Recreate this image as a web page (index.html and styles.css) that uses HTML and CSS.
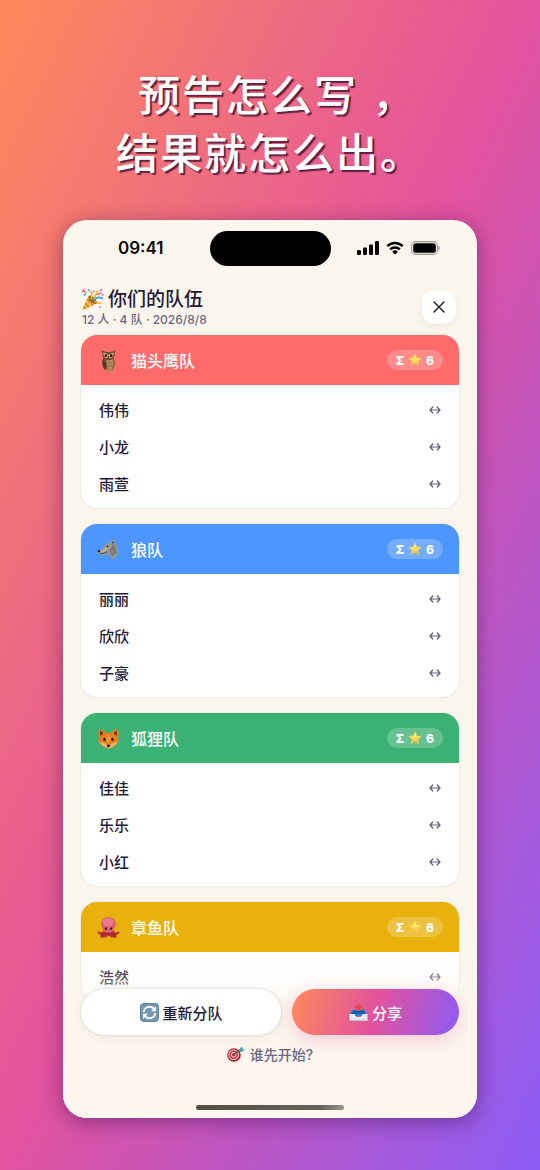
FILE: index.html
```html
<!DOCTYPE html>
<html lang="zh-CN">
<head>
    <meta charset="UTF-8">
    <meta name="viewport" content="width=device-width, initial-scale=1.0">
    <title>你们的队伍</title>
    <link rel="stylesheet" href="styles.css">
</head>
<body>

<!-- shared icons -->
<svg class="sprite" aria-hidden="true">
    <defs>
        <linearGradient id="star-fill" x1="0" y1="0" x2="0" y2="1">
            <stop offset="0" stop-color="#fff6a8"/>
            <stop offset=".5" stop-color="#ffe45c"/>
            <stop offset="1" stop-color="#f7a93c"/>
        </linearGradient>
    </defs>
    <symbol id="swap" viewBox="0 0 12 10">
        <path d="M3.8 2 1 5l2.800 3M8.200 2 11 5 8.200 8M1.200 5h9.600" fill="none" stroke="#625e70" stroke-width="1.200" stroke-linecap="round" stroke-linejoin="round"/>
    </symbol>
    <symbol id="star" viewBox="0 0 24 24">
        <path d="M12 1.500 15 8.600l7.800.6-6 5 1.900 7.600-6.700-4.100-6.700 4.100 1.900-7.600-6-5 7.800-.6z" fill="url(#star-fill)" stroke="#f9cf55" stroke-width="1" stroke-linejoin="round"/>
    </symbol>
</svg>

<h1 class="slogan">预告怎么写<span class="comma">，</span><br>结果就怎么出。</h1>

<main class="phone">
    <div class="status">
        <span class="time">09:41</span>
        <span class="island"></span>
        <span class="signals">
            <svg width="22" height="14" viewBox="0 0 22 14">
                <rect x="0" y="9" width="4" height="5" rx="1.200"/>
                <rect x="6" y="6.500" width="4" height="7.500" rx="1.200"/>
                <rect x="12" y="3.500" width="4" height="10.500" rx="1.200"/>
                <rect x="18" y="0" width="4" height="14" rx="1.200"/>
            </svg>
            <svg width="18" height="14" viewBox="0 0 18 14">
                <path d="M1.300 5.200a11 11 0 0 1 15.400 0M4.200 8.300a7 7 0 0 1 9.600 0" fill="none" stroke="#000" stroke-width="2.500"/>
                <path d="M9 13.600 6.200 10.700a4 4 0 0 1 5.600 0z"/>
            </svg>
            <svg width="29" height="14" viewBox="0 0 29 14">
                <rect x=".6" y=".6" width="25.800" height="12.800" rx="4" fill="none" stroke="#9b9892" stroke-width="1.100"/>
                <rect x="2.200" y="2.200" width="22.600" height="9.600" rx="2.600"/>
                <path d="M27.400 4.800c1.800.7 1.800 3.700 0 4.400z" fill="#9b9892"/>
            </svg>
        </span>
    </div>

    <header class="top">
        <div>
            <h2>
                <svg class="emoji" viewBox="0 0 24 24">
                    <path d="M8 8.500 1.500 21.500c-.3.900.4 1.500 1.300 1.200l13.400-6.400z" fill="#f6bd45"/>
                    <path d="m6.500 11.500 6.200 6.500M4.300 16l4 4M2.600 19.500l2.300 2.200" stroke="#c9792a" stroke-width="1.500"/>
                    <ellipse cx="12.200" cy="12.300" rx="2.600" ry="5.800" transform="rotate(-45 12.200 12.300)" fill="#9a642b"/>
                    <path d="M10.500 11.500c1-3 1.700-5.800-.4-8.500M13 12c1.500-4 3.500-5 4.300-9.500" fill="none" stroke="#f3b52e" stroke-width="1.800"/>
                    <path d="M13.500 12.800c2-3 5.800-3.300 9.500-1.800" fill="none" stroke="#54a3e3" stroke-width="2"/>
                    <path d="M14 14.300c3.200-.5 4.300 2.700 7.500 1.500" fill="none" stroke="#efaa37" stroke-width="1.600"/>
                    <path d="m1 4 2-2 1 3M20 3l2-2M17 7l4-2" fill="none" stroke="#e96a91" stroke-width="1.600"/>
                    <path d="m3 8 2-2M7 1.500l2 1.200" stroke="#4e9fe0" stroke-width="1.600"/>
                    <circle cx="13.500" cy="3.500" r="1" fill="#e45c90"/>
                    <circle cx="20" cy="20" r="1" fill="#e77b8f"/>
                    <circle cx="22.500" cy="7" r="1" fill="#df6195"/>
                    <circle cx="5.500" cy="4.500" r=".9" fill="#7cbf63"/>
                </svg>
                你们的队伍
            </h2>
            <p>12 人 · 4 队 · 2026/8/8</p>
        </div>
        <button class="close" aria-label="关闭">
            <svg width="12" height="12" viewBox="0 0 12 12"><path d="m1 1 10 10M11 1 1 11" stroke="#17151f" stroke-width="1.400" stroke-linecap="round"/></svg>
        </button>
    </header>

    <div class="teams">
        <section class="team owl">
            <div class="team-header">
                <svg class="emoji" viewBox="0 0 24 24">
                    <path d="M6.500 9c-1.800 4-1.500 9.500 2 13h7.500c3.300-3.500 3.500-9 1-13z" fill="#8b6141"/>
                    <path d="M6.700 10c-1.800 4-1.300 8.500 1.500 11.500 2.500-3.500 1.800-8-1.500-11.500z" fill="#553824"/>
                    <path d="M10.500 11.500c-.5 4 .2 7.500 1.500 10h3c2-3 2.300-6.500 1.200-10z" fill="#b58c64"/>
                    <path d="m11.500 14 1 1 1-1 1 1 1-1m-4 3 1 1 1-1 1 1 1-1" fill="none" stroke="#795236" stroke-width=".8"/>
                    <path d="M4.600 1.200 9.500 3h5l4.900-1.800c-1 2-.9 3.800-1.200 5.800-.5 3-3.200 4.500-6.200 4.500S6.300 10 5.800 7c-.3-2-.2-3.800-1.200-5.800z" fill="#6f4a33"/>
                    <path d="M6.300 3.500 10.500 5 12 6.500 13.500 5l4.200-1.500-.8 3c-.6 2-1.600 3-3.100 3.200L12 9l-1.800.7c-1.500-.2-2.500-1.200-3.100-3.200z" fill="#c8ab8a"/>
                    <circle cx="9.200" cy="7" r="1.900" fill="#e9a92b"/>
                    <circle cx="14.800" cy="7" r="1.900" fill="#e9a92b"/>
                    <circle cx="9.200" cy="7" r="1.400" fill="#1c1411"/>
                    <circle cx="14.800" cy="7" r="1.400" fill="#1c1411"/>
                    <path d="m11.200 8 .8-.8.8.8-.8 2.300z" fill="#39312d"/>
                    <path d="M9.500 21.500v1.700M11.500 21.500v1.700M14 21.500v1.700M16 21.500v1.700" stroke="#b98b4a" stroke-width="1.200"/>
                </svg>
                <h3>猫头鹰队</h3>
                <span class="score">Σ <svg><use href="#star"/></svg> 6</span>
            </div>
            <ul>
                <li>伟伟 <button aria-label="换队"><svg><use href="#swap"/></svg></button></li>
                <li>小龙 <button aria-label="换队"><svg><use href="#swap"/></svg></button></li>
                <li>雨萱 <button aria-label="换队"><svg><use href="#swap"/></svg></button></li>
            </ul>
        </section>

        <section class="team wolf">
            <div class="team-header">
                <svg class="emoji" viewBox="0 0 24 24">
                    <path d="M10 6.500c1.500-1 2.800-1.700 4-2l2-3.500c1.500.8 2.600 2.500 2.700 4.500 2.300 2.500 3.700 6 3.800 10.500l-1-.5.2 3-1.400-1-.6 4-1.500-1.500-1.200 3c-2.200-1.500-4-4-5-6.500-2.300.6-3.600 1.700-6.600 1.400-2-.3-3.700-1-4.500-2.100-.5-.8-.3-1.900.5-2.300 2.700-1.200 4-2.500 5-4.500.5-1.200 1.100-2 2.600-2.500z" fill="#969690"/>
                    <path d="M3.500 13c3-.6 4.500-2 6-4.500l3.200 1.200-3.200 4.500-6 1.300z" fill="#aeada6"/>
                    <path d="M13.500 12c1.700-1.500 2.500-3.500 3-6 3 3 4 6.500 4 10.500-2.500 0-3.500 1.500-4.200 3.200-1.500-2.200-3-4.700-2.800-7.700z" fill="#7b7c78"/>
                    <path d="M15.500 5 16.400 2.800c.8 1 1.200 2 1.200 3.400z" fill="#4b4c4a"/>
                    <path d="M3 16.300c2.300.4 5-.5 7.500-2" fill="none" stroke="#454545" stroke-width="1"/>
                    <ellipse cx="2" cy="13.800" rx="1.400" ry="1.200" fill="#242426"/>
                    <path d="m9.500 9 2-.6-.7 1.500z" fill="#e4ae34"/>
                    <circle cx="10.700" cy="9" r=".8" fill="#18181a"/>
                </svg>
                <h3>狼队</h3>
                <span class="score">Σ <svg><use href="#star"/></svg> 6</span>
            </div>
            <ul>
                <li>丽丽 <button aria-label="换队"><svg><use href="#swap"/></svg></button></li>
                <li>欣欣 <button aria-label="换队"><svg><use href="#swap"/></svg></button></li>
                <li>子豪 <button aria-label="换队"><svg><use href="#swap"/></svg></button></li>
            </ul>
        </section>

        <section class="team fox">
            <div class="team-header">
                <svg class="emoji" viewBox="0 0 24 24">
                    <path d="M2.200 2C1 5.500 1.200 9 2.300 11.500L1 15l1.300.3-.4 2 1.700.2c1.700 3 4.900 4.500 8.400 5.300 3.500-.8 6.700-2.300 8.400-5.300l1.700-.2-.4-2L23 15l-1.300-3.500C22.800 9 23 5.500 21.800 2 19 2.500 16.500 4 15 6H9C7.500 4 5 2.500 2.200 2z" fill="#e87c1e"/>
                    <path d="M3.300 4C2.900 6 3.100 8 3.600 9.500L6.500 6.700C5.800 5.300 4.800 4.500 3.300 4zM20.700 4c.4 2 .2 4-.3 5.500l-2.900-2.800c.7-1.400 1.700-2.200 3.200-2.700z" fill="#6e3418"/>
                    <path d="M12 6.500 9.800 13 12 18l2.200-5z" fill="#f39a38"/>
                    <path d="M2.800 16c3-.3 5 .8 7 2.300h4.400c2-1.500 4-2.600 7-2.300-1.700 3.500-5 5.600-9.200 6.500-4.200-.9-7.500-3-9.200-6.500z" fill="#f0b266"/>
                    <ellipse cx="7.800" cy="13" rx="1.300" ry="1.700" fill="#24150e"/>
                    <ellipse cx="16.200" cy="13" rx="1.300" ry="1.700" fill="#24150e"/>
                    <path d="M10.200 18.800c.5-.8 3.100-.8 3.600 0 0 1.200-.9 2.200-1.800 2.200s-1.800-1-1.800-2.200z" fill="#211713"/>
                </svg>
                <h3>狐狸队</h3>
                <span class="score">Σ <svg><use href="#star"/></svg> 6</span>
            </div>
            <ul>
                <li>佳佳 <button aria-label="换队"><svg><use href="#swap"/></svg></button></li>
                <li>乐乐 <button aria-label="换队"><svg><use href="#swap"/></svg></button></li>
                <li>小红 <button aria-label="换队"><svg><use href="#swap"/></svg></button></li>
            </ul>
        </section>

        <section class="team octopus">
            <div class="team-header">
                <svg class="emoji" viewBox="0 0 24 24">
                    <path d="M7 14c0 3-3 3.500-5 2.200-1.200-.6-1.800.8-1 1.900 1 1.200 2.200 1.500 3.200 1.600-1.300.8-1 2.300.2 2.700 3 .8 6-.4 7.600-2.400 1.600 2 4.600 3.200 7.600 2.400 1.200-.4 1.500-1.900.2-2.700 1-.1 2.200-.4 3.200-1.600.8-1.100.2-2.500-1-1.900-2 1.300-5 .8-5-2.200z" fill="#bd2f37"/>
                    <path d="M4.500 19.700c2 0 3.800-.6 4.800-2M19.500 19.700c-2 0-3.800-.6-4.800-2M12 17v3" fill="none" stroke="#7f1b24" stroke-width="1"/>
                    <path d="M12 1C7.500 1 4.300 4.300 4.300 8.300c0 3.200 2 4.700 2.500 6.700.8 3 9.600 3 10.400 0 .5-2 2.500-3.500 2.500-6.700C19.700 4.300 16.500 1 12 1z" fill="#dc6171"/>
                    <ellipse cx="11.500" cy="6.300" rx="5.500" ry="4.200" fill="#e67c8b"/>
                    <circle cx="9.300" cy="13.300" r="1.200" fill="#35131a"/>
                    <circle cx="14.700" cy="13.300" r="1.200" fill="#35131a"/>
                </svg>
                <h3>章鱼队</h3>
                <span class="score">Σ <svg><use href="#star"/></svg> 6</span>
            </div>
            <ul>
                <li>浩然 <button aria-label="换队"><svg><use href="#swap"/></svg></button></li>
            </ul>
        </section>
    </div>

    <footer class="bottom">
        <div class="actions">
            <button class="redo">
                <svg width="19" height="19" viewBox="0 0 20 20">
                    <rect x=".5" y=".5" width="19" height="19" rx="3.500" fill="#7597b2" stroke="#567b99"/>
                    <path d="M4 9.500c.3-3.500 3-5.500 6-5.500 2 0 3.500.8 4.600 2M16 10.500c-.3 3.500-3 5.500-6 5.500-2 0-3.500-.8-4.600-2" fill="none" stroke="#fff" stroke-width="2"/>
                    <path d="M16.800 3.500v5.300h-5.300zM3.200 16.500v-5.300h5.300z" fill="#fff"/>
                </svg>
                重新分队
            </button>
            <button class="share">
                <svg width="19" height="19" viewBox="0 0 20 20">
                    <path d="m3.500 7 13 0 3 5v2H.5v-2z" fill="#2f86d8"/>
                    <path d="M4.500 8h11l2 3.500h-15z" fill="#1d5aa6"/>
                    <path d="M10 1c2.500 1 3.800 2.300 4 4.200h-2v3H8v-3H6C6.200 3.300 7.500 2 10 1z" fill="#ea4547"/>
                    <path d="M.5 11.500h5.300c.6 2.300 2 3.300 4.200 3.300s3.600-1 4.200-3.300h5.300v7H.5z" fill="#e8ecf2"/>
                    <path d="M.5 17.500h19v1.500H.5z" fill="#c0c6d3"/>
                </svg>
                分享
            </button>
        </div>
        <a class="first" href="#">
            <svg width="18" height="16" viewBox="0 0 18 16">
                <ellipse cx="7" cy="9" rx="6.800" ry="6.800" fill="#ad2128"/>
                <circle cx="6.700" cy="8.700" r="5.300" fill="#f5dcda"/>
                <circle cx="6.700" cy="8.700" r="4.300" fill="#c92d32"/>
                <circle cx="6.700" cy="8.700" r="2.700" fill="#f5dcda"/>
                <circle cx="6.700" cy="8.700" r="1.800" fill="#c3272d"/>
                <path d="m7 8.500 7-5" stroke="#3f5260" stroke-width="1.200"/>
                <path d="m12 3.500 3-3 .5 2.300 2.300.7-3 2.500-2.300-.3z" fill="#35a5b7"/>
            </svg>
            谁先开始?
        </a>
        <div class="home-bar"></div>
    </footer>
</main>

</body>
</html>
```
FILE: styles.css
```css
* {
    box-sizing: border-box;
}
body {
    font-family: Inter, "Noto Sans CJK SC", sans-serif;
    margin: 0;
    padding: 64px 63px 52px;
    height: 100vh;
    display: flex;
    flex-direction: column;
    background: linear-gradient(to bottom right, #ff8a5b, #e2529e 50%, #8b5cf6);
    color: #1f1a3a;
}
h1, h2, h3, p, ul {
    margin: 0;
    padding: 0;
}
button {
    font: inherit;
    border: none;
    padding: 0;
    cursor: pointer;
}
svg {
    flex: none;
}
.sprite {
    position: absolute;
    width: 0;
    height: 0;
}
.slogan {
    font-family: "Noto Sans CJK SC", sans-serif;
    font-size: 42px;
    font-weight: 500;
    line-height: 58px;
    letter-spacing: 2px;
    text-align: center;
    white-space: nowrap;
    color: white;
    text-shadow: 2px 2px 1px rgba(60, 15, 50, 0.8);
}
.comma {
    padding-left: 14px;
    margin-right: -14px;
}
.phone {
    position: relative;
    flex: 1;
    min-height: 0;
    margin-top: 40px;
    padding: 0 18px;
    display: flex;
    flex-direction: column;
    overflow: hidden;
    border-radius: 24px;
    background: #fbf6ed;
    box-shadow: 0 4px 20px rgba(50, 10, 70, 0.45);
}
.status {
    display: grid;
    grid-template-columns: 1fr 121px 1fr;
    align-items: center;
    height: 56px;
}
.time {
    padding-left: 37px;
    font-size: 17px;
    font-weight: 600;
    color: #0a0a0a;
}
.island {
    height: 35px;
    border-radius: 18px;
    background: #000;
}
.signals {
    display: flex;
    justify-content: flex-end;
    gap: 7px;
    padding-right: 19px;
}
.top {
    display: flex;
    justify-content: space-between;
    align-items: center;
    height: 59px;
    padding-top: 4px;
}
.top h2 {
    display: flex;
    align-items: center;
    gap: 4px;
    font-size: 19px;
    font-weight: 500;
    line-height: 24px;
}
.top p {
    padding-left: 1px;
    font-size: 12px;
    font-weight: 500;
    line-height: 16px;
    color: #6b6683;
}
.emoji {
    width: 23px;
    height: 23px;
}
.close {
    display: grid;
    place-items: center;
    width: 34px;
    height: 34px;
    margin: 0 3px 2px 0;
    border-radius: 12px;
    background: white;
    box-shadow: 0 2px 6px rgba(60, 50, 30, 0.08);
}
.teams {
    flex: 1;
    min-height: 0;
    display: flex;
    flex-direction: column;
    gap: 16px;
}
.team {
    flex: none;
    overflow: hidden;
    border-radius: 16px;
    background: white;
    box-shadow: 0 0 2px rgba(40, 35, 80, 0.2);
}
.team-header {
    display: flex;
    align-items: center;
    height: 50px;
    padding: 0 16px;
    gap: 11px;
    color: white;
}
.owl .team-header {
    background: #ff6b6b;
}
.wolf .team-header {
    background: #4d96ff;
}
.fox .team-header {
    background: #3bb273;
}
.octopus .team-header {
    background: #e8b10b;
}
.team h3 {
    flex: 1;
    font-size: 16px;
    font-weight: 500;
}
.score {
    display: flex;
    align-items: center;
    gap: 4px;
    height: 20px;
    padding: 0 9px;
    border-radius: 10px;
    background: rgba(255, 255, 255, 0.22);
    font-size: 12px;
    font-weight: 800;
}
.score svg {
    width: 14px;
    height: 14px;
}
.team ul {
    list-style: none;
    padding: 6px 18px;
}
.team li {
    display: flex;
    justify-content: space-between;
    align-items: center;
    height: 37px;
    font-size: 15px;
    font-weight: 500;
}
.team li button {
    display: flex;
    background: none;
}
.team li svg {
    width: 12px;
    height: 10px;
}
.bottom {
    position: absolute;
    left: 0;
    right: 0;
    bottom: 0;
    padding: 39px 18px 8px;
    background: linear-gradient(rgba(251, 246, 237, 0) 12px, #fcf6ee 70px);
}
.actions {
    display: grid;
    grid-template-columns: 6fr 5fr;
    gap: 11px;
}
.actions button {
    display: flex;
    justify-content: center;
    align-items: center;
    gap: 4px;
    height: 46px;
    border-radius: 23px;
    font-size: 15px;
    font-weight: 500;
}
.actions .redo {
    background: white;
    color: #1f1a3a;
    box-shadow: 0 0 3px rgba(40, 35, 80, 0.18), 0 4px 12px rgba(80, 80, 50, 0.06);
}
.actions .share {
    background: linear-gradient(105deg, #ff8a5b, #e2529e 50%, #8b5cf6);
    color: white;
    box-shadow: 0 5px 18px rgba(236, 72, 153, 0.25);
}
.first {
    display: flex;
    justify-content: center;
    align-items: center;
    gap: 5px;
    height: 38px;
    margin-bottom: 32px;
    font-size: 14px;
    font-weight: 500;
    color: #6b6683;
    text-decoration: none;
}
.home-bar {
    width: 148px;
    height: 5px;
    margin: 0 auto;
    border-radius: 3px;
    background: linear-gradient(90deg, #4f4f45, #66645c 85%, #99968e);
}
```
